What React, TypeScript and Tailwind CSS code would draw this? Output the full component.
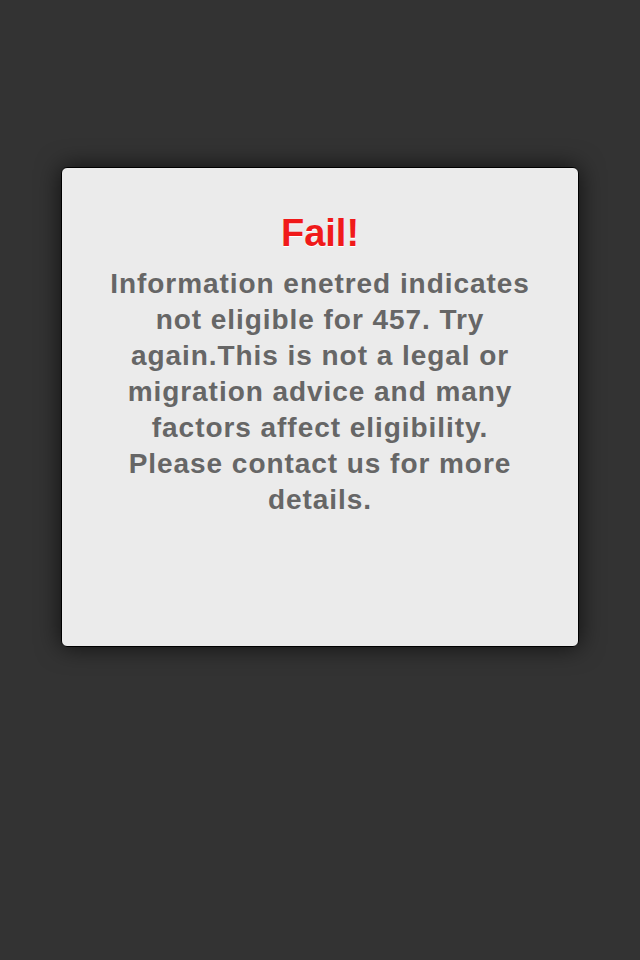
export default function App() {
  return (
    <div className="min-h-[960px] w-full bg-[#333333] pt-[167px] font-['Liberation_Sans',Arial,sans-serif]">
      {/* Alert card */}
      <div className="mx-auto flex h-[480px] w-[518px] flex-col items-center rounded-[6px] border border-black bg-[#ebebeb] pt-[42px] shadow-[0_0_24px_rgba(0,0,0,0.7)]">
        <h1 className="text-[38px] font-bold leading-[46px] text-[#f01a1a] [text-shadow:0_1px_0_#ffffff]">Fail!</h1>
        <p className="mt-[10px] text-center text-[28px] font-bold leading-[36px] tracking-[0.95px] text-[#666666]">
          Information enetred indicates<br />
          not eligible for 457. Try<br />
          again.This is not a legal or<br />
          migration advice and many<br />
          factors affect eligibility.<br />
          Please contact us for more<br />
          details.
        </p>
      </div>
    </div>
  );
}
